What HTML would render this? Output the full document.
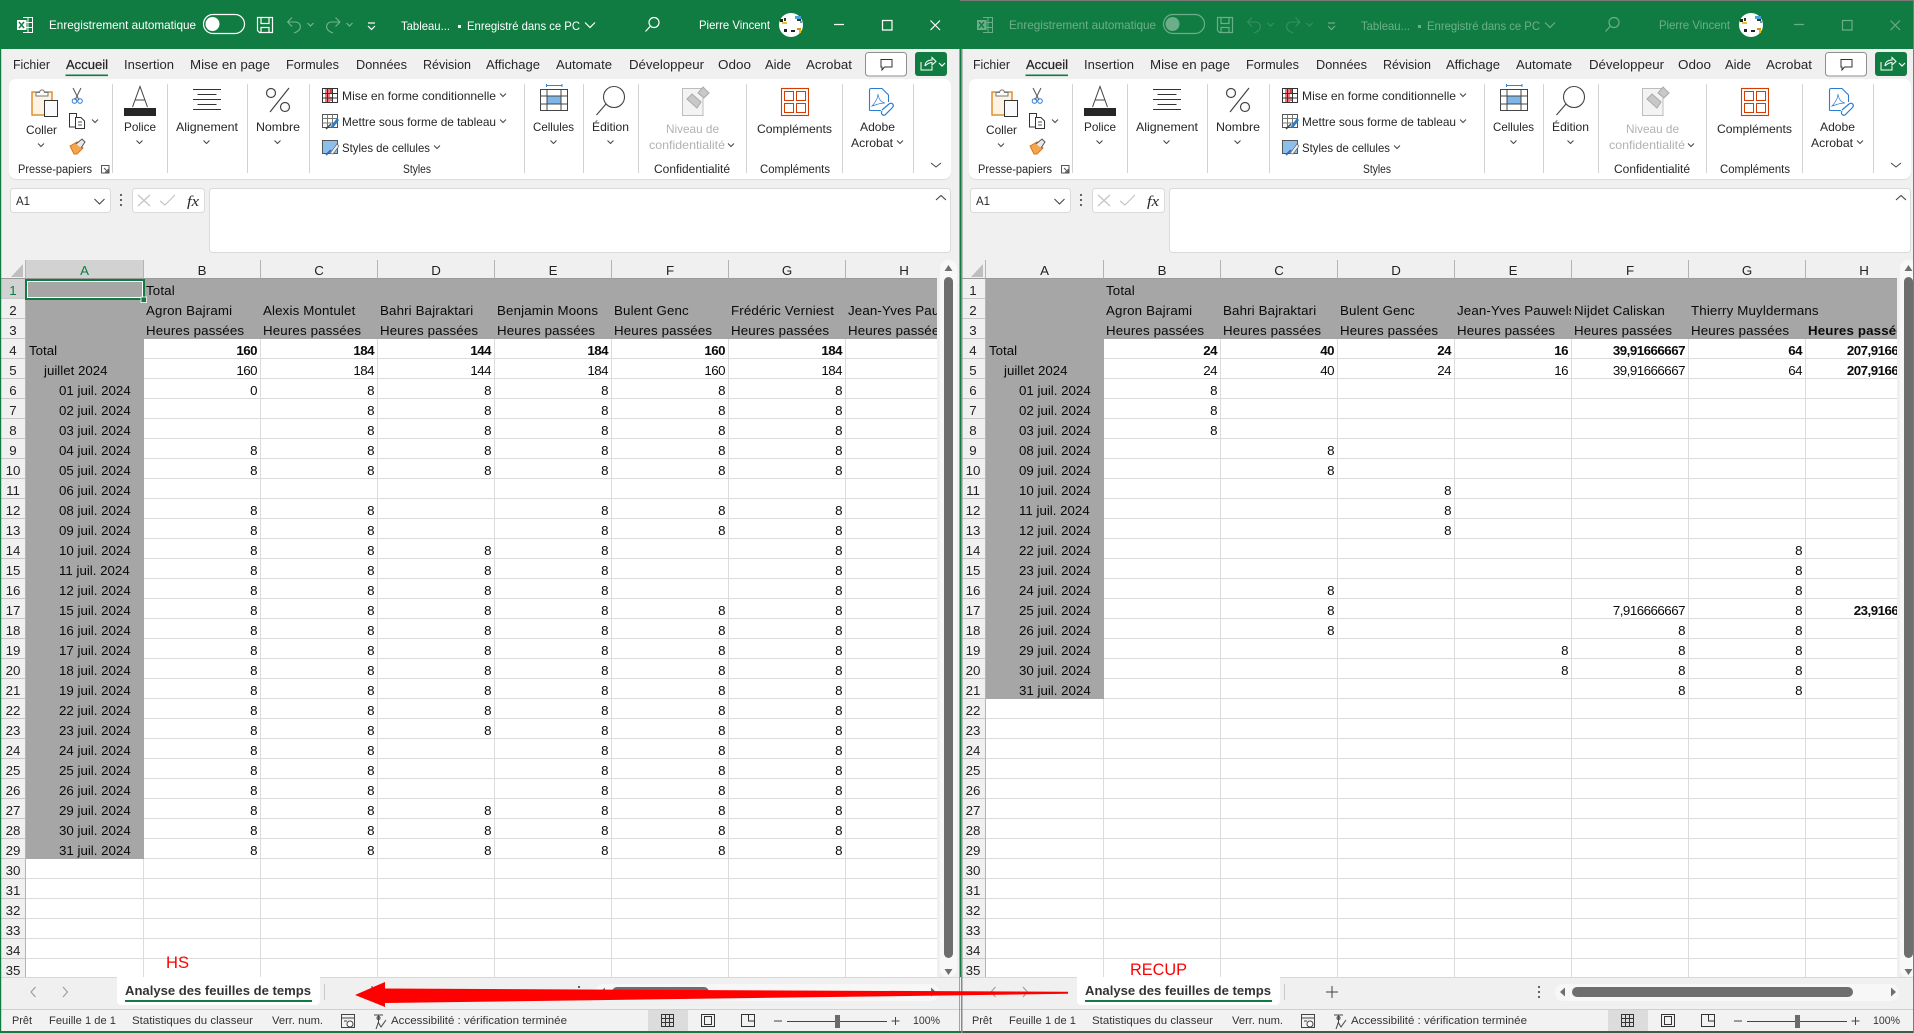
<!DOCTYPE html>
<html lang="fr"><head><meta charset="utf-8"><title>Excel</title>
<style>
html,body{margin:0;padding:0;width:1914px;height:1033px;overflow:hidden;background:#f0f0f0}
body{position:relative;font-family:"Liberation Sans",sans-serif}
.sheet{position:absolute;top:260px;width:936px;height:717px;overflow:hidden;background:#fff}
table{table-layout:fixed;width:962px;border-collapse:separate;border-spacing:0;font:13.3px "Liberation Sans",sans-serif;color:#0a0a0a}
col.r{width:25px}col.a{width:118px}col.x{width:117px}
th,td{box-sizing:border-box;height:20px;padding:4px 0 0;line-height:15px;vertical-align:top;white-space:nowrap;overflow:hidden}
th{font-weight:normal;text-align:center;background:#f0f0f0;border-right:1px solid #b4b4b4;border-bottom:1px solid #c8c8c8;color:#222}
td{text-align:right;padding-right:3px;letter-spacing:-.5px;border-right:1px solid #dcdcdc;border-bottom:1px solid #dcdcdc}
tr.c th{height:19px;padding-top:3px;border-bottom:1px solid #9a9a9a;border-right:1px solid #b4b4b4}
tr.g td,td.t,td.j,td.d,td.e{background:#a6a6a6;border-color:#a6a6a6}
tr.g td,td.t,td.j,td.d{text-align:left;letter-spacing:0;padding-right:0}
tr.g td{padding-left:2px;letter-spacing:.15px}
td.t{padding-left:3px}td.j{padding-left:18px}td.d{padding-left:33px}
td.o{overflow:visible}
.b{font-weight:bold}
th.s{background:#d2d2d2;color:#107c41}
svg{position:absolute;left:0;top:0}
svg text{font-family:"Liberation Sans",sans-serif;font-size:12px;fill:#262626}
.tt text{fill:#fff}
.m{font-size:13px!important}
.l{font-size:11.5px!important}
.u{font-size:11px!important;fill:#333!important}
.n{stroke:#444;fill:none;stroke-width:1}
</style></head><body>

<div class="sheet" style="left:1px"><table><colgroup><col class="r"><col class="a"><col class="x"><col class="x"><col class="x"><col class="x"><col class="x"><col class="x"><col class="x"></colgroup>
<tr class="c"><th><th class="s">A<th>B<th>C<th>D<th>E<th>F<th>G<th>H
<tr class="g"><th class="s">1<td><td>Total<td><td><td><td><td><td>
<tr class="g"><th>2<td><td>Agron Bajrami<td>Alexis Montulet<td>Bahri Bajraktari<td>Benjamin Moons<td>Bulent Genc<td>Frédéric Verniest<td>Jean-Yves Pauwels
<tr class="g"><th>3<td><td>Heures passées<td>Heures passées<td>Heures passées<td>Heures passées<td>Heures passées<td>Heures passées<td>Heures passées
<tr class="b"><th style="font-weight:normal">4<td class="t" style="font-weight:normal">Total<td>160<td>184<td>144<td>184<td>160<td>184<td>
<tr><th>5<td class="j">juillet 2024<td>160<td>184<td>144<td>184<td>160<td>184<td>
<tr><th>6<td class="d">01 juil. 2024<td>0<td>8<td>8<td>8<td>8<td>8<td>
<tr><th>7<td class="d">02 juil. 2024<td><td>8<td>8<td>8<td>8<td>8<td>
<tr><th>8<td class="d">03 juil. 2024<td><td>8<td>8<td>8<td>8<td>8<td>
<tr><th>9<td class="d">04 juil. 2024<td>8<td>8<td>8<td>8<td>8<td>8<td>
<tr><th>10<td class="d">05 juil. 2024<td>8<td>8<td>8<td>8<td>8<td>8<td>
<tr><th>11<td class="d">06 juil. 2024<td><td><td><td><td><td><td>
<tr><th>12<td class="d">08 juil. 2024<td>8<td>8<td><td>8<td>8<td>8<td>
<tr><th>13<td class="d">09 juil. 2024<td>8<td>8<td><td>8<td>8<td>8<td>
<tr><th>14<td class="d">10 juil. 2024<td>8<td>8<td>8<td>8<td><td>8<td>
<tr><th>15<td class="d">11 juil. 2024<td>8<td>8<td>8<td>8<td><td>8<td>
<tr><th>16<td class="d">12 juil. 2024<td>8<td>8<td>8<td>8<td><td>8<td>
<tr><th>17<td class="d">15 juil. 2024<td>8<td>8<td>8<td>8<td>8<td>8<td>
<tr><th>18<td class="d">16 juil. 2024<td>8<td>8<td>8<td>8<td>8<td>8<td>
<tr><th>19<td class="d">17 juil. 2024<td>8<td>8<td>8<td>8<td>8<td>8<td>
<tr><th>20<td class="d">18 juil. 2024<td>8<td>8<td>8<td>8<td>8<td>8<td>
<tr><th>21<td class="d">19 juil. 2024<td>8<td>8<td>8<td>8<td>8<td>8<td>
<tr><th>22<td class="d">22 juil. 2024<td>8<td>8<td>8<td>8<td>8<td>8<td>
<tr><th>23<td class="d">23 juil. 2024<td>8<td>8<td>8<td>8<td>8<td>8<td>
<tr><th>24<td class="d">24 juil. 2024<td>8<td>8<td><td>8<td>8<td>8<td>
<tr><th>25<td class="d">25 juil. 2024<td>8<td>8<td><td>8<td>8<td>8<td>
<tr><th>26<td class="d">26 juil. 2024<td>8<td>8<td><td>8<td>8<td>8<td>
<tr><th>27<td class="d">29 juil. 2024<td>8<td>8<td>8<td>8<td>8<td>8<td>
<tr><th>28<td class="d">30 juil. 2024<td>8<td>8<td>8<td>8<td>8<td>8<td>
<tr><th>29<td class="d">31 juil. 2024<td>8<td>8<td>8<td>8<td>8<td>8<td>
<tr><th>30<td><td><td><td><td><td><td><td>
<tr><th>31<td><td><td><td><td><td><td><td>
<tr><th>32<td><td><td><td><td><td><td><td>
<tr><th>33<td><td><td><td><td><td><td><td>
<tr><th>34<td><td><td><td><td><td><td><td>
<tr><th>35<td><td><td><td><td><td><td><td>
</table></div>

<div class="sheet" style="left:961px"><table><colgroup><col class="r"><col class="a"><col class="x"><col class="x"><col class="x"><col class="x"><col class="x"><col class="x"><col class="x"></colgroup>
<tr class="c"><th><th>A<th>B<th>C<th>D<th>E<th>F<th>G<th>H
<tr class="g"><th>1<td><td>Total<td><td><td><td><td><td>
<tr class="g"><th>2<td><td>Agron Bajrami<td>Bahri Bajraktari<td>Bulent Genc<td>Jean-Yves Pauwels<td>Nijdet Caliskan<td class="o">Thierry Muyldermans<td>
<tr class="g"><th>3<td><td>Heures passées<td>Heures passées<td>Heures passées<td>Heures passées<td>Heures passées<td>Heures passées<td class="b">Heures passées
<tr class="b"><th style="font-weight:normal">4<td class="t" style="font-weight:normal">Total<td>24<td>40<td>24<td>16<td>39,91666667<td>64<td>207,9166667
<tr><th>5<td class="j">juillet 2024<td>24<td>40<td>24<td>16<td>39,91666667<td>64<td class="b">207,9166667
<tr><th>6<td class="d">01 juil. 2024<td>8<td><td><td><td><td><td>
<tr><th>7<td class="d">02 juil. 2024<td>8<td><td><td><td><td><td>
<tr><th>8<td class="d">03 juil. 2024<td>8<td><td><td><td><td><td>
<tr><th>9<td class="d">08 juil. 2024<td><td>8<td><td><td><td><td>
<tr><th>10<td class="d">09 juil. 2024<td><td>8<td><td><td><td><td>
<tr><th>11<td class="d">10 juil. 2024<td><td><td>8<td><td><td><td>
<tr><th>12<td class="d">11 juil. 2024<td><td><td>8<td><td><td><td>
<tr><th>13<td class="d">12 juil. 2024<td><td><td>8<td><td><td><td>
<tr><th>14<td class="d">22 juil. 2024<td><td><td><td><td><td>8<td>
<tr><th>15<td class="d">23 juil. 2024<td><td><td><td><td><td>8<td>
<tr><th>16<td class="d">24 juil. 2024<td><td>8<td><td><td><td>8<td>
<tr><th>17<td class="d">25 juil. 2024<td><td>8<td><td><td>7,916666667<td>8<td class="b">23,9166667
<tr><th>18<td class="d">26 juil. 2024<td><td>8<td><td><td>8<td>8<td>
<tr><th>19<td class="d">29 juil. 2024<td><td><td><td>8<td>8<td>8<td>
<tr><th>20<td class="d">30 juil. 2024<td><td><td><td>8<td>8<td>8<td>
<tr><th>21<td class="d">31 juil. 2024<td><td><td><td><td>8<td>8<td>
<tr><th>22<td><td><td><td><td><td><td><td>
<tr><th>23<td><td><td><td><td><td><td><td>
<tr><th>24<td><td><td><td><td><td><td><td>
<tr><th>25<td><td><td><td><td><td><td><td>
<tr><th>26<td><td><td><td><td><td><td><td>
<tr><th>27<td><td><td><td><td><td><td><td>
<tr><th>28<td><td><td><td><td><td><td><td>
<tr><th>29<td><td><td><td><td><td><td><td>
<tr><th>30<td><td><td><td><td><td><td><td>
<tr><th>31<td><td><td><td><td><td><td><td>
<tr><th>32<td><td><td><td><td><td><td><td>
<tr><th>33<td><td><td><td><td><td><td><td>
<tr><th>34<td><td><td><td><td><td><td><td>
<tr><th>35<td><td><td><td><td><td><td><td>
</table></div>

<svg width="1914" height="1033" viewBox="0 0 1914 1033" xmlns="http://www.w3.org/2000/svg">
<defs>
<g id="v"><path d="M-3-1.5 0 1.5 3-1.5" fill="none" stroke="#444" stroke-width="1"/></g>
<g id="titleicons" fill="none" stroke="#fff" stroke-width="1.2">
  <path d="M23 17.5H32.5V32.5H23M23 22.5H32.5M23 27.5H32.5M28 17.5V32.5" stroke-width="1"/>
  <rect x="17" y="20" width="9.5" height="10" fill="#fff" stroke="none"/>
  <path d="M19 22 24 28M24 22 19 28" stroke="#107c41" stroke-width="1.4"/>
  <rect x="203.5" y="14.5" width="41" height="19" rx="9.5"/>
  <circle cx="212.5" cy="24" r="7" fill="#fff" stroke="none"/>
  <path d="M257.5 17.5H272.5V32.5H259.5L257.5 30.5ZM261 17.5V23.5H269V17.5M261 32.5V27.5H269V32.5"/>
  <g opacity=".42">
  <path d="M287.5 22H295C300 22 301 26 300 28.5 299 31 297 32 294 33M287.5 22 292 17.5M287.5 22 292 26.5" stroke-width="1.1"/>
  <path d="M340 22H332C327 22 326 26 327 28.5 328 31 330 32 333 33M340 22 335.5 17.5M340 22 335.5 26.5" stroke-width="1.1"/>
  <path d="M307.5 23 310.5 26 313.5 23M346.5 23 349.5 26 352.5 23"/>
  </g>
  <path d="M368 26 371.5 29.5 375 26"/>
  <path d="M368 23H375"/>
  <rect x="458" y="25" width="3" height="3" fill="#fff" stroke="none"/>
  <path d="M585 22.5 590 27.5 595 22.5"/>
  <circle cx="654" cy="22.5" r="5"/><path d="M650 26.5 645.5 31.5"/>
  <path d="M834 24.5H844M882.5 20.5H892V30H882.5ZM930.5 20.5 940 30M940 20.5 930.5 30"/>
</g>
<g id="avatar">
  <circle cx="791" cy="25" r="12" fill="#fff"/>
  <rect x="780" y="19" width="3" height="3" fill="#222"/><rect x="782" y="22" width="5" height="2" fill="#e8c21c"/><rect x="784" y="18" width="2" height="3" fill="#333"/>
  <rect x="795" y="16" width="6" height="3" fill="#4aa3d8"/><rect x="797" y="19" width="4" height="2" fill="#333"/><rect x="800" y="21" width="2" height="2" fill="#4aa3d8"/>
  <rect x="791" y="30" width="4" height="2" fill="#222"/><rect x="797" y="28" width="4" height="2" fill="#d98c20"/><rect x="799" y="30" width="2" height="3" fill="#e8c21c"/><rect x="784" y="29" width="3" height="3" fill="#222"/>
</g>
<g id="base">
  <rect x="9" y="79" width="942" height="100" rx="7" fill="#dcdcdc" transform="translate(0 1)"/>
  <rect x="9" y="79" width="942" height="100" rx="7" fill="#fff"/>
  <rect x="65.5" y="74.5" width="42.5" height="1.6" fill="#107c41"/>
  <rect x="865.5" y="52.5" width="41" height="23.5" rx="3" fill="#fff" stroke="#8f8f8f"/>
  <path d="M881 59.5H892V67H884.5L882 70V67H881Z" fill="#fff" stroke="#333"/>
  <rect x="915" y="52" width="32" height="24" rx="3" fill="#107c41"/>
  <path d="M921 62V70H932V66M925 66C925 62 928 60 932 60V57.5L936 61.5 932 65V62.5C929 62.5 927 64 925 66" fill="none" stroke="#fff"/>
  <path d="M939 63 942 66 945 63" fill="none" stroke="#fff" stroke-width="1.2"/>
  <!-- seps -->
  <path d="M112.5 84V173M167.5 84V173M247.5 84V173M309.5 84V173M524.5 84V173M583.5 84V173M638.5 84V173M746.5 84V173M842.5 84V173M913.5 84V173" stroke="#d2d2d2"/>
  <!-- coller -->
  <rect x="32" y="92" width="20" height="23" fill="#fdf3e4" stroke="#d98a1e" stroke-width="1.4"/>
  <path d="M36 96V92.5H39.5C40 89 44 89 44.5 92.5H48V96Z" fill="#fff" stroke="#777"/>
  <rect x="44.5" y="100.5" width="13" height="16" fill="#fafafa" stroke="#333"/>
  <!-- cut -->
  <path d="M73 88 79 100M81 88 75 100" stroke="#555" fill="none"/>
  <circle cx="74.5" cy="101" r="2.3" fill="none" stroke="#2b7cd3"/><circle cx="80" cy="101" r="2.3" fill="none" stroke="#2b7cd3"/>
  <!-- copy -->
  <path d="M75 127H69.5V113.5H76.5V118" fill="none" stroke="#333"/>
  <path d="M75.5 117.5H81L84.5 121V128.5H75.5Z" fill="#fff" stroke="#333"/>
  <path d="M78 122H82M78 125H82" stroke="#555"/>
  <!-- painter -->
  <path d="M70 146 77 142 83 148 77 154H74Z" fill="#f4a64a" stroke="#d9741e"/>
  <path d="M76 144 82 139 85 142 81 148" fill="#e8e8e8" stroke="#555"/>
  <use href="#v" x="41" y="145"/><use href="#v" x="95" y="121"/>
  <path d="M101.5 165.5H109V173H101.5ZM104 168 108 172M105 172H108V169" fill="none" stroke="#555"/>
  <!-- police -->
  <path d="M132.5 107 140 86.5 147.5 107M135 100H145" fill="none" stroke="#444"/>
  <rect x="124" y="108" width="32" height="8" fill="#262626"/>
  <use href="#v" x="139.5" y="142"/>
  <!-- align -->
  <path d="M193 89.5H221M197.5 94.5H216.5M193 99.5H221M197.5 104.5H216.5M193 109.5H221" stroke="#333"/>
  <use href="#v" x="206.5" y="142"/>
  <!-- % -->
  <circle cx="271" cy="93" r="4.5" fill="none" stroke="#444" stroke-width="1.2"/><circle cx="285" cy="107" r="4.5" fill="none" stroke="#444" stroke-width="1.2"/><path d="M289 88 270 112" stroke="#444" stroke-width="1.2"/>
  <use href="#v" x="277.5" y="142"/>
  <!-- styles -->
  <rect x="322.5" y="88.5" width="15" height="14" fill="#fff" stroke="#333"/>
  <rect x="325" y="89" width="5" height="13" fill="#f2737b"/><rect x="330" y="89" width="3" height="4" fill="#e03b3b"/><rect x="325" y="97" width="8" height="4" fill="#f2737b"/>
  <path d="M327.5 88.5V102.5M332.5 88.5V102.5M322.5 93.5H337.5M322.5 98H337.5" stroke="#333" fill="none"/>
  <rect x="322.5" y="114.5" width="15" height="13" fill="#fff" stroke="#555"/>
  <path d="M322.5 118.5H337.5M322.5 123H337.5M327.5 114.5V127.5M332.5 114.5V127.5" stroke="#777" fill="none"/>
  <path d="M330 127.5 337 118 339 120 333 128Z" fill="#2b7cd3"/><path d="M326 129 331 124" stroke="#444" stroke-width="1.5"/>
  <rect x="322.5" y="140.5" width="15" height="13" fill="#8cc0ec" stroke="#555"/>
  <path d="M330 153.5 337 144 339 146 333 154Z" fill="#eee" stroke="#555" stroke-width=".6"/><path d="M326 155 331 150" stroke="#2b6cc0" stroke-width="1.8"/>
  <use href="#v" x="503" y="95"/><use href="#v" x="503" y="121"/><use href="#v" x="437" y="147"/>
  <!-- cellules -->
  <path d="M546.5 85.5H562M546.5 84V87M562 84V87" stroke="#2b88d8" fill="none"/>
  <rect x="540.5" y="89.5" width="27" height="21" fill="#fff" stroke="#444"/>
  <rect x="547" y="96" width="14" height="8" fill="#7fb6e8" stroke="#2b6cb0"/>
  <path d="M547 89.5V110.5M561 89.5V110.5M540.5 96H567.5M540.5 104H567.5" stroke="#444" fill="none"/>
  <use href="#v" x="553.5" y="142"/>
  <!-- edition -->
  <circle cx="614" cy="97" r="10.5" fill="none" stroke="#444" stroke-width="1.1"/><path d="M606 104 596.5 115" stroke="#444" stroke-width="1.1"/>
  <use href="#v" x="610.5" y="142"/>
  <!-- niveau -->
  <path d="M682.5 88.5H703V115.5H682.5Z" fill="#f3f3f3" stroke="#bdbdbd"/>
  <path d="M687 99 697 108 701 102 692 94ZM698 93 703 87 709 93 704 98Z" fill="#c8c8c8" stroke="#aaa"/>
  <use href="#v" x="731" y="145"/>
  <!-- complements -->
  <rect x="781.5" y="88.5" width="27" height="27" fill="#fff" stroke="#d83b01" stroke-width="1.1"/>
  <rect x="784.5" y="91.5" width="9" height="9" fill="none" stroke="#d83b01"/><rect x="796.5" y="91.5" width="9" height="9" fill="none" stroke="#d83b01"/><rect x="784.5" y="103.5" width="9" height="9" fill="none" stroke="#d83b01"/><rect x="796.5" y="103.5" width="9" height="9" fill="none" stroke="#d83b01"/>
  <!-- adobe -->
  <path d="M869.5 110.5V90C869.5 89 870 88.5 871 88.5H882L888.5 95V102M869.5 110.5H881" fill="none" stroke="#2b7cd3" stroke-width="1.1"/>
  <path d="M872 106C876 102 878 97 878 94 879 100 881 102 885 103 879 103 876 105 872 106Z" fill="none" stroke="#2b7cd3" stroke-width=".7"/>
  <path d="M882 110 889 104C892 102 895 105 892 108L886 114C884 117 880 114 882 111" fill="none" stroke="#2b7cd3" stroke-width="1.2"/>
  <use href="#v" x="900" y="142"/>
  <path d="M931 163 936 167 941 163" fill="none" stroke="#444"/>
  <!-- name/formula -->
  <rect x="10.5" y="188.5" width="100" height="24" rx="3" fill="#fff" stroke="#dadada"/>
  <path d="M94.5 199 99.5 204 104.5 199" fill="none" stroke="#444" stroke-width="1.1"/>
  <circle cx="121" cy="195" r="1" fill="#333"/><circle cx="121" cy="200" r="1" fill="#333"/><circle cx="121" cy="205" r="1" fill="#333"/>
  <rect x="132.5" y="188.5" width="72" height="24" rx="3" fill="#fff" stroke="#dadada"/>
  <path d="M138 195 150 206M150 195 138 206M160 201 165 205 175 195" fill="none" stroke="#c4c4c4" stroke-width="1.2"/>
  <rect x="209.5" y="188.5" width="741" height="64" rx="3" fill="#fff" stroke="#dadada"/>
  <path d="M936 200 941 195.5 946 200" fill="none" stroke="#444" stroke-width="1.1"/>
  <!-- corner -->
  <path d="M23 264V277H11Z" fill="#bfbfbf"/>
  <!-- vscroll -->
  <rect x="937" y="260" width="23" height="717" fill="#f0f0f0"/>
  <rect x="940" y="260" width="17" height="717" rx="8" fill="#f8f8f8"/>
  <path d="M948.5 265 952.5 271H944.5Z" fill="#6e6e6e"/>
  <rect x="944" y="277" width="9" height="681" rx="4.5" fill="#6e6e6e"/>
  <path d="M948.5 975 952.5 969H944.5Z" fill="#6e6e6e"/>
  <!-- tabs strip -->
  <rect x="0" y="977" width="960" height="32" fill="#f0f0f0"/>
  <path d="M0 977.5H960" stroke="#d8d8d8"/>
  <path d="M117 977H320V1000Q320 1005 315 1005H122Q117 1005 117 1000Z" fill="#fff"/>
  <rect x="125" y="1000" width="187" height="2" fill="#107c41"/>
  <path d="M324.5 984V1000" stroke="#c8c8c8"/>
  <path d="M35.5 987 31 992 35.5 997M63 987 67.5 992 63 997" fill="none" stroke="#9a9a9a" stroke-width="1.1"/>
  <path d="M372 986V998M366 992H378" stroke="#444"/>
  <circle cx="579" cy="987" r="1" fill="#333"/><circle cx="579" cy="992" r="1" fill="#333"/><circle cx="579" cy="997" r="1" fill="#333"/>
  <rect x="595" y="984" width="344" height="17" rx="8" fill="#f7f7f7"/>
  <path d="M600 992 605 987.5V996.5ZM936 992 931 987.5V996.5Z" fill="#6e6e6e"/>
  <!-- status -->
  <rect x="0" y="1009" width="960" height="24" fill="#f2f2f2"/>
  <path d="M0 1009.5H960" stroke="#cfcfcf"/>
  <rect x="341.5" y="1014.5" width="13" height="13" fill="none" stroke="#444"/><path d="M341.5 1018H354.5M344 1021H347" stroke="#444"/><circle cx="350" cy="1024" r="3" fill="#fff" stroke="#444"/>
  <path d="M374 1015H383M378.5 1015V1022L376 1029M378 1022 381 1027 386 1020" fill="none" stroke="#444"/><circle cx="378.5" cy="1018" r="1.5" fill="none" stroke="#444"/>
  <rect x="648" y="1010" width="40" height="21" fill="#dcdcdc"/>
  <rect x="661.5" y="1014.5" width="12" height="12" fill="none" stroke="#333"/><path d="M665.5 1014.5V1026.5M669.5 1014.5V1026.5M661.5 1018.5H673.5M661.5 1022.5H673.5" stroke="#333"/>
  <rect x="701.5" y="1014.5" width="13" height="12" fill="none" stroke="#333"/><rect x="704.5" y="1016.5" width="7" height="8" fill="none" stroke="#333"/>
  <path d="M741.5 1014.5H754.5V1026.5H741.5ZM748.5 1014.5V1021H754.5" fill="none" stroke="#333"/>
  <path d="M774 1021H782M787 1021.5H887M891.5 1021H899.5M895.5 1017V1025" stroke="#444"/>
  <rect x="835" y="1015" width="5" height="13" fill="#6a6a6a"/>
</g>
</defs>

<!-- window 1 -->
<rect x="0" y="0" width="960" height="49" fill="#107c41"/>
<use href="#base"/>
<use href="#titleicons"/>
<use href="#avatar"/>
<g class="tt">
<text x="49" y="29" textLength="147" lengthAdjust="spacingAndGlyphs">Enregistrement automatique</text>
<text x="401" y="30" textLength="49" lengthAdjust="spacingAndGlyphs">Tableau...</text>
<text x="467" y="30" textLength="113" lengthAdjust="spacingAndGlyphs">Enregistré dans ce PC</text>
<text x="699" y="29" textLength="71" lengthAdjust="spacingAndGlyphs">Pierre Vincent</text>
</g>
<g>
<text class="m" x="13" y="69" textLength="37" lengthAdjust="spacingAndGlyphs">Fichier</text>
<text class="m" x="66" y="69" textLength="42" lengthAdjust="spacingAndGlyphs" style="stroke:#262626;stroke-width:.25">Accueil</text>
<text class="m" x="124" y="69" textLength="50" lengthAdjust="spacingAndGlyphs">Insertion</text>
<text class="m" x="190" y="69" textLength="80" lengthAdjust="spacingAndGlyphs">Mise en page</text>
<text class="m" x="286" y="69" textLength="53" lengthAdjust="spacingAndGlyphs">Formules</text>
<text class="m" x="356" y="69" textLength="51" lengthAdjust="spacingAndGlyphs">Données</text>
<text class="m" x="423" y="69" textLength="48" lengthAdjust="spacingAndGlyphs">Révision</text>
<text class="m" x="486" y="69" textLength="54" lengthAdjust="spacingAndGlyphs">Affichage</text>
<text class="m" x="556" y="69" textLength="56" lengthAdjust="spacingAndGlyphs">Automate</text>
<text class="m" x="629" y="69" textLength="75" lengthAdjust="spacingAndGlyphs">Développeur</text>
<text class="m" x="718" y="69" textLength="33" lengthAdjust="spacingAndGlyphs">Odoo</text>
<text class="m" x="765" y="69" textLength="26" lengthAdjust="spacingAndGlyphs">Aide</text>
<text class="m" x="806" y="69" textLength="46" lengthAdjust="spacingAndGlyphs">Acrobat</text>
<text x="26" y="134" textLength="31" lengthAdjust="spacingAndGlyphs">Coller</text>
<text x="124" y="131" textLength="32" lengthAdjust="spacingAndGlyphs">Police</text>
<text x="176" y="131" textLength="62" lengthAdjust="spacingAndGlyphs">Alignement</text>
<text x="256" y="131" textLength="44" lengthAdjust="spacingAndGlyphs">Nombre</text>
<text x="342" y="100" textLength="154" lengthAdjust="spacingAndGlyphs">Mise en forme conditionnelle</text>
<text x="342" y="126" textLength="154" lengthAdjust="spacingAndGlyphs">Mettre sous forme de tableau</text>
<text x="342" y="152" textLength="88" lengthAdjust="spacingAndGlyphs">Styles de cellules</text>
<text x="533" y="131" textLength="41" lengthAdjust="spacingAndGlyphs">Cellules</text>
<text x="592" y="131" textLength="37" lengthAdjust="spacingAndGlyphs">Édition</text>
<text x="666" y="133" textLength="53" lengthAdjust="spacingAndGlyphs" style="fill:#b2b2b2">Niveau de</text>
<text x="649" y="149" textLength="76" lengthAdjust="spacingAndGlyphs" style="fill:#b2b2b2">confidentialité</text>
<text x="757" y="133" textLength="75" lengthAdjust="spacingAndGlyphs">Compléments</text>
<text x="860" y="131" textLength="35" lengthAdjust="spacingAndGlyphs">Adobe</text>
<text x="851" y="147" textLength="42" lengthAdjust="spacingAndGlyphs">Acrobat</text>
<text class="l" x="18" y="173" textLength="74" lengthAdjust="spacingAndGlyphs">Presse-papiers</text>
<text class="l" x="403" y="173" textLength="28" lengthAdjust="spacingAndGlyphs">Styles</text>
<text class="l" x="654" y="173" textLength="76" lengthAdjust="spacingAndGlyphs">Confidentialité</text>
<text class="l" x="760" y="173" textLength="70" lengthAdjust="spacingAndGlyphs">Compléments</text>
<text x="16" y="205" textLength="14" lengthAdjust="spacingAndGlyphs">A1</text>
<text x="187" y="206" textLength="12" lengthAdjust="spacingAndGlyphs" style="font-family:'Liberation Serif',serif;font-style:italic;font-size:15px">fx</text>
<text style="font-weight:bold;font-size:12.5px;fill:#333" x="125" y="995" textLength="186" lengthAdjust="spacingAndGlyphs">Analyse des feuilles de temps</text>
<text class="u" x="12" y="1024" textLength="20" lengthAdjust="spacingAndGlyphs">Prêt</text>
<text class="u" x="49" y="1024" textLength="67" lengthAdjust="spacingAndGlyphs">Feuille 1 de 1</text>
<text class="u" x="132" y="1024" textLength="121" lengthAdjust="spacingAndGlyphs">Statistiques du classeur</text>
<text class="u" x="272" y="1024" textLength="51" lengthAdjust="spacingAndGlyphs">Verr. num.</text>
<text class="u" x="391" y="1024" textLength="176" lengthAdjust="spacingAndGlyphs">Accessibilité : vérification terminée</text>
<text class="u" x="913" y="1024" textLength="27" lengthAdjust="spacingAndGlyphs">100%</text>
</g>
<rect x="612" y="987" width="97" height="10" rx="5" fill="#6e6e6e"/>
<!-- A1 selection -->
<rect x="26" y="280" width="118" height="19" fill="none" stroke="#107c41" stroke-width="2"/>
<rect x="27.5" y="281.5" width="115" height="16" fill="none" stroke="#fff"/>
<rect x="141" y="297" width="5.5" height="5.5" fill="#107c41" stroke="#fff" stroke-width=".8"/>
<rect x="0" y="49" width="1.2" height="984" fill="#107c41"/>
<rect x="0" y="1031" width="960" height="2" fill="#107c41"/>
<rect x="959.5" y="49" width="1.5" height="984" fill="#107c41"/>

<!-- window 2 -->
<rect x="960" y="0" width="954" height="49" fill="#107c41"/>
<g transform="translate(960 0)">
<use href="#base"/>
<g opacity=".38"><use href="#titleicons"/>
<g class="tt">
<text x="49" y="29" textLength="147" lengthAdjust="spacingAndGlyphs">Enregistrement automatique</text>
<text x="401" y="30" textLength="49" lengthAdjust="spacingAndGlyphs">Tableau...</text>
<text x="467" y="30" textLength="113" lengthAdjust="spacingAndGlyphs">Enregistré dans ce PC</text>
<text x="699" y="29" textLength="71" lengthAdjust="spacingAndGlyphs">Pierre Vincent</text>
</g></g>
<use href="#avatar"/>
<g>
<text class="m" x="13" y="69" textLength="37" lengthAdjust="spacingAndGlyphs">Fichier</text>
<text class="m" x="66" y="69" textLength="42" lengthAdjust="spacingAndGlyphs" style="stroke:#262626;stroke-width:.25">Accueil</text>
<text class="m" x="124" y="69" textLength="50" lengthAdjust="spacingAndGlyphs">Insertion</text>
<text class="m" x="190" y="69" textLength="80" lengthAdjust="spacingAndGlyphs">Mise en page</text>
<text class="m" x="286" y="69" textLength="53" lengthAdjust="spacingAndGlyphs">Formules</text>
<text class="m" x="356" y="69" textLength="51" lengthAdjust="spacingAndGlyphs">Données</text>
<text class="m" x="423" y="69" textLength="48" lengthAdjust="spacingAndGlyphs">Révision</text>
<text class="m" x="486" y="69" textLength="54" lengthAdjust="spacingAndGlyphs">Affichage</text>
<text class="m" x="556" y="69" textLength="56" lengthAdjust="spacingAndGlyphs">Automate</text>
<text class="m" x="629" y="69" textLength="75" lengthAdjust="spacingAndGlyphs">Développeur</text>
<text class="m" x="718" y="69" textLength="33" lengthAdjust="spacingAndGlyphs">Odoo</text>
<text class="m" x="765" y="69" textLength="26" lengthAdjust="spacingAndGlyphs">Aide</text>
<text class="m" x="806" y="69" textLength="46" lengthAdjust="spacingAndGlyphs">Acrobat</text>
<text x="26" y="134" textLength="31" lengthAdjust="spacingAndGlyphs">Coller</text>
<text x="124" y="131" textLength="32" lengthAdjust="spacingAndGlyphs">Police</text>
<text x="176" y="131" textLength="62" lengthAdjust="spacingAndGlyphs">Alignement</text>
<text x="256" y="131" textLength="44" lengthAdjust="spacingAndGlyphs">Nombre</text>
<text x="342" y="100" textLength="154" lengthAdjust="spacingAndGlyphs">Mise en forme conditionnelle</text>
<text x="342" y="126" textLength="154" lengthAdjust="spacingAndGlyphs">Mettre sous forme de tableau</text>
<text x="342" y="152" textLength="88" lengthAdjust="spacingAndGlyphs">Styles de cellules</text>
<text x="533" y="131" textLength="41" lengthAdjust="spacingAndGlyphs">Cellules</text>
<text x="592" y="131" textLength="37" lengthAdjust="spacingAndGlyphs">Édition</text>
<text x="666" y="133" textLength="53" lengthAdjust="spacingAndGlyphs" style="fill:#b2b2b2">Niveau de</text>
<text x="649" y="149" textLength="76" lengthAdjust="spacingAndGlyphs" style="fill:#b2b2b2">confidentialité</text>
<text x="757" y="133" textLength="75" lengthAdjust="spacingAndGlyphs">Compléments</text>
<text x="860" y="131" textLength="35" lengthAdjust="spacingAndGlyphs">Adobe</text>
<text x="851" y="147" textLength="42" lengthAdjust="spacingAndGlyphs">Acrobat</text>
<text class="l" x="18" y="173" textLength="74" lengthAdjust="spacingAndGlyphs">Presse-papiers</text>
<text class="l" x="403" y="173" textLength="28" lengthAdjust="spacingAndGlyphs">Styles</text>
<text class="l" x="654" y="173" textLength="76" lengthAdjust="spacingAndGlyphs">Confidentialité</text>
<text class="l" x="760" y="173" textLength="70" lengthAdjust="spacingAndGlyphs">Compléments</text>
<text x="16" y="205" textLength="14" lengthAdjust="spacingAndGlyphs">A1</text>
<text x="187" y="206" textLength="12" lengthAdjust="spacingAndGlyphs" style="font-family:'Liberation Serif',serif;font-style:italic;font-size:15px">fx</text>
<text style="font-weight:bold;font-size:12.5px;fill:#333" x="125" y="995" textLength="186" lengthAdjust="spacingAndGlyphs">Analyse des feuilles de temps</text>
<text class="u" x="12" y="1024" textLength="20" lengthAdjust="spacingAndGlyphs">Prêt</text>
<text class="u" x="49" y="1024" textLength="67" lengthAdjust="spacingAndGlyphs">Feuille 1 de 1</text>
<text class="u" x="132" y="1024" textLength="121" lengthAdjust="spacingAndGlyphs">Statistiques du classeur</text>
<text class="u" x="272" y="1024" textLength="51" lengthAdjust="spacingAndGlyphs">Verr. num.</text>
<text class="u" x="391" y="1024" textLength="176" lengthAdjust="spacingAndGlyphs">Accessibilité : vérification terminée</text>
<text class="u" x="913" y="1024" textLength="27" lengthAdjust="spacingAndGlyphs">100%</text>
</g>
<rect x="612" y="987" width="281" height="10" rx="5" fill="#6e6e6e"/>
<rect x="0" y="1031" width="954" height="2" fill="#3d5c4b"/>
</g>
<rect x="960" y="0" width="954" height="1" fill="#7a7a7a"/>
<rect x="961" y="49" width="1.5" height="984" fill="#8a8a8a"/>
<rect x="1913" y="0" width="1" height="1033" fill="#7a7a7a"/>

<!-- annotations -->
<text x="166" y="968" textLength="23" lengthAdjust="spacingAndGlyphs" style="font-size:17px;fill:#f00">HS</text>
<text x="1130" y="975" textLength="57" lengthAdjust="spacingAndGlyphs" style="font-size:17px;fill:#f00">RECUP</text>
<path d="M355 995 385 982V988.5L1068 991.8V993.8L385 1003V1007Z" fill="#f00"/>
</svg>
</body></html>
